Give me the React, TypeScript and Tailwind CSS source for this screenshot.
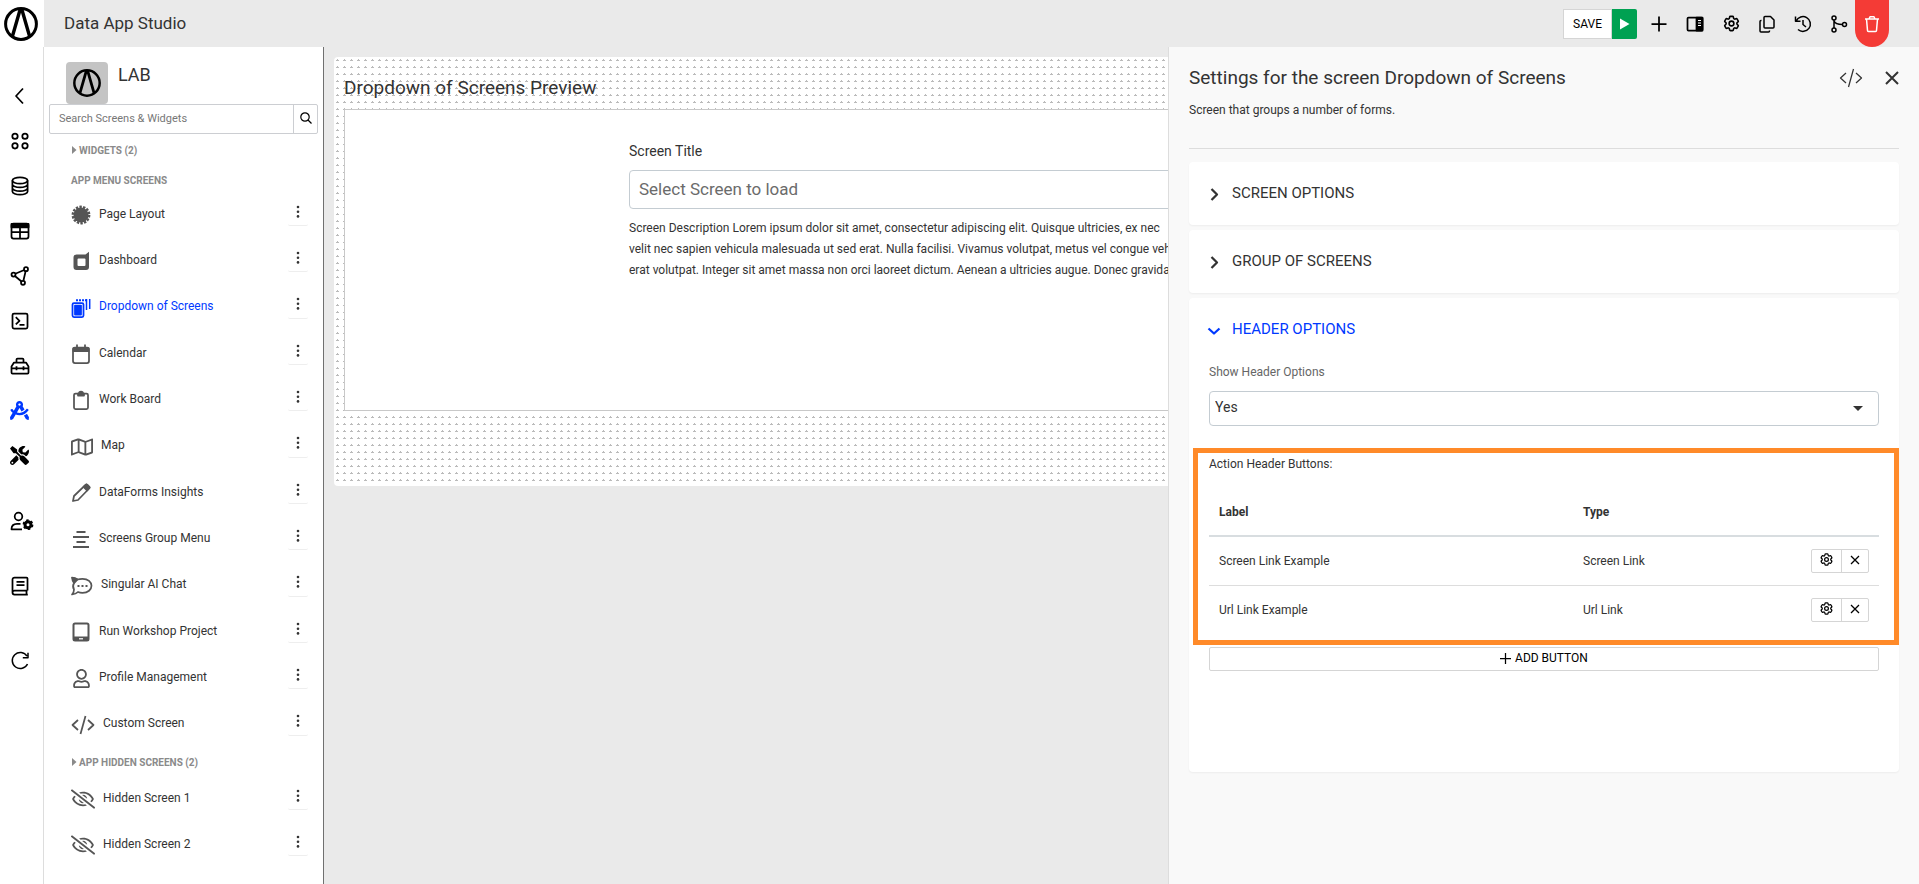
import type { ReactNode } from 'react';
import { FaDraftingCompass, FaRegEyeSlash, FaRegMap, FaRegUser, FaTools } from 'react-icons/fa';
import { HiOutlineCog6Tooth } from 'react-icons/hi2';

type IconProps = { children: ReactNode; size?: number; width?: number; stroke?: number };

// line icons share one 20px grid
function Icon({ children, size = 20, width, stroke = 1.75 }: IconProps) {
  const w = width ?? size;
  return (
    <svg
      width={w}
      height={size}
      viewBox={`0 0 ${w} ${size}`}
      fill="none"
      stroke="currentColor"
      strokeWidth={stroke}
      strokeLinejoin="round"
      className="shrink-0"
      aria-hidden="true"
    >
      {children}
    </svg>
  );
}

function Logo({ size }: { size: number }) {
  return (
    <svg width={size} height={size} viewBox="0 0 34 34" fill="none" stroke="currentColor" aria-hidden="true">
      <circle cx="17" cy="17" r="15.4" strokeWidth="3" />
      <path d="M8.5 29 16 3h2l7.500 26" strokeWidth="3.400" />
    </svg>
  );
}

const CodeIcon = ({ stroke = 1.75 }: { stroke?: number }) => (
  <Icon width={24} stroke={stroke}>
    <path d="M7 5 1.500 10 7 15M17 5l5.500 5-5.500 5M14.500 1l-5 18" />
  </Icon>
);

const railIcons: { label: string; icon: ReactNode; gap?: string; active?: boolean }[] = [
  { label: 'Back', icon: <Icon><path d="M13 2.500 6 10l7 7.500" /></Icon> },
  {
    label: 'Apps',
    icon: (
      <Icon>
        <circle cx="5" cy="5.200" r="2.700" /><circle cx="15" cy="5.200" r="2.700" />
        <circle cx="5" cy="14.800" r="2.700" /><circle cx="15" cy="14.800" r="2.700" />
      </Icon>
    ),
  },
  {
    label: 'Data',
    icon: (
      <Icon>
        <ellipse cx="10" cy="4.500" rx="7.600" ry="3.200" />
        <path d="M2.400 4.500v11c0 1.800 3.400 3.200 7.600 3.200s7.600-1.400 7.600-3.200v-11M2.400 8.200c0 1.800 3.400 3.200 7.600 3.200s7.600-1.400 7.600-3.200M2.400 12c0 1.800 3.400 3.200 7.600 3.200s7.600-1.400 7.600-3.200" />
      </Icon>
    ),
  },
  {
    label: 'Tables',
    icon: (
      <Icon>
        <rect x="1.500" y="2.500" width="17" height="15" rx="2" />
        <path d="M1.500 2.800h17v3.500h-17z" fill="currentColor" />
        <path d="M2 11.200h16M10 6v11" />
      </Icon>
    ),
  },
  {
    label: 'Flows',
    icon: (
      <Icon>
        <circle cx="3.500" cy="8.500" r="2" /><circle cx="16" cy="3.200" r="2" /><circle cx="13" cy="16.800" r="2" />
        <path d="m5.300 7.700 8.900-3.700M15.600 5.200l-2.200 9.600M4.900 10l6.600 5.500" />
      </Icon>
    ),
  },
  {
    label: 'Console',
    icon: (
      <Icon>
        <rect x="2.500" y="2.500" width="15" height="15" rx="1.500" />
        <path d="m5.800 6.200 3.700 3.600-3.700 3.600M9.500 13.800h5" />
      </Icon>
    ),
  },
  {
    label: 'Toolbox',
    icon: (
      <Icon>
        <path d="M1.500 10.500 4 6.500h12l2.500 4v6a1 1 0 0 1-1 1h-15a1 1 0 0 1-1-1zM6.500 6.200V3.500a1 1 0 0 1 1-1h5a1 1 0 0 1 1 1v2.700M1.500 12.300h17M6.500 10.200v4M13.500 10.200v4" />
      </Icon>
    ),
  },
  { label: 'Studio', active: true, icon: <FaDraftingCompass size={19} /> },
  { label: 'Tools', icon: <FaTools size={19} /> },
  {
    label: 'User settings',
    gap: 'mt-5',
    icon: (
      <Icon width={24}>
        <circle cx="8.500" cy="5.500" r="3.800" />
        <path d="M12 18.300H1.500c0-3.600 2.300-5.500 5.500-5.500h3.500" />
        <circle cx="18" cy="13.700" r="3" strokeWidth="3" />
        <circle cx="18" cy="13.700" r="4.600" strokeWidth="1.600" strokeDasharray="2.400 2.417" />
      </Icon>
    ),
  },
  {
    label: 'Docs',
    gap: 'mt-5',
    icon: (
      <Icon>
        <path d="M17.500 14.500H4.500a2 2 0 0 0 0 4h13.300M2.500 16.500V3.500a2 2 0 0 1 2-2h12a1 1 0 0 1 1 1v12M16.500 14.500v4M6.500 5.800h8M6.500 9h8" />
      </Icon>
    ),
  },
  {
    label: 'Refresh',
    gap: 'mt-[30px]',
    icon: <Icon stroke={1.5}><path d="M17 5.200A8 8 0 1 0 17.500 13M18 1.800v5h-5.200" /></Icon>,
  },
];

const menuScreens: { label: string; icon: ReactNode; active?: boolean }[] = [
  {
    label: 'Page Layout',
    icon: (
      <Icon>
        <circle cx="10" cy="10" r="7.500" fill="currentColor" stroke="none" />
        <circle cx="10" cy="10" r="8.200" strokeWidth="2.400" strokeDasharray="2.400 1.280" />
      </Icon>
    ),
  },
  {
    label: 'Dashboard',
    icon: (
      <Icon>
        <path
          fill="currentColor"
          fillRule="evenodd"
          stroke="none"
          d="M5.500 3.500h9L18 .8V16a3 3 0 0 1-3 3H5.500a3 3 0 0 1-3-3V6.500a3 3 0 0 1 3-3zM7.500 7.500a1 1 0 0 0-1 1v5.500a1 1 0 0 0 1 1h6a1 1 0 0 0 1-1V8.500a1 1 0 0 0-1-1z"
        />
      </Icon>
    ),
  },
  {
    label: 'Dropdown of Screens',
    active: true,
    icon: (
      <Icon>
        <rect x="1.500" y="5" width="11" height="14" rx="1.500" />
        <path d="M4 7.500h6v9H4z" fill="currentColor" />
        <path d="M5 2.200h11" strokeDasharray="2 1" strokeWidth="2" />
        <path d="M15.500 1v11M18.700 1v10" strokeWidth="1.500" />
      </Icon>
    ),
  },
  {
    label: 'Calendar',
    icon: (
      <Icon>
        <rect x="2" y="3.500" width="16" height="15.500" rx="2" />
        <path d="M2.500 4.200h15v3h-15zM6 .5v3M14 .5v3" fill="currentColor" />
      </Icon>
    ),
  },
  {
    label: 'Work Board',
    icon: (
      <Icon>
        <rect x="3" y="3.500" width="14" height="15.500" rx="1.500" />
        <path d="M7 3.500h1a2 2 0 0 1 4 0h1v2H7z" fill="currentColor" />
      </Icon>
    ),
  },
  { label: 'Map', icon: <FaRegMap size={22} className="shrink-0" /> },
  {
    label: 'DataForms Insights',
    icon: (
      <Icon>
        <path d="M2 18l1-5L14.500 1.800a1.500 1.500 0 0 1 2 0l1.700 1.700a1.500 1.500 0 0 1 0 2L7 17z" />
        <path d="m12.500 4 3-2.500 3 3L16 7.500z" fill="currentColor" />
      </Icon>
    ),
  },
  {
    label: 'Screens Group Menu',
    icon: <Icon stroke={2}><path d="M5.500 3h9M2 8h16M5.500 13h9M2 18h16" /></Icon>,
  },
  {
    label: 'Singular AI Chat',
    icon: (
      <Icon width={22}>
        <path d="M3 7C1.800 5.500 1.200 3.500 1 1.500c2.200 0 4 .7 5.500 2C8 3 9.800 2.800 11.500 2.800c5.500 0 9 3.200 9 7s-3.500 7-9 7c-1.700 0-3-.2-4.500-.8-1.500 1.500-3.500 2.200-6 2.500 1.500-1.500 2-3.200 2-5C1.700 11.500 1.900 9 3 7z" />
        <path d="m1.500 1.800 5 1.700L3.300 6.800z" fill="currentColor" />
        <path d="M6.500 10h2M10.500 10h2M14.500 10h2" strokeWidth="2" />
      </Icon>
    ),
  },
  {
    label: 'Run Workshop Project',
    icon: (
      <Icon stroke={2}>
        <rect x="2.500" y="1.500" width="15" height="17" rx="1.500" />
        <path d="M3 15h14v3H3z" fill="currentColor" strokeWidth="1" />
        <path d="M8 16.800h4" stroke="white" strokeWidth="1.200" />
      </Icon>
    ),
  },
  { label: 'Profile Management', icon: <span className="flex w-5 justify-center"><FaRegUser size={19} /></span> },
  { label: 'Custom Screen', icon: <CodeIcon /> },
];

const hiddenScreens = ['Hidden Screen 1', 'Hidden Screen 2'];

const toolbar = [
  { label: 'Add', icon: <Icon><path d="M10 2.500v15M2.500 10h15" /></Icon> },
  {
    label: 'Toggle panel',
    icon: (
      <Icon>
        <rect x="2.500" y="3.500" width="15" height="13" rx="1" />
        <path d="M11.500 3.500h6v13h-6z" fill="currentColor" />
        <path d="M13 6.500h3M13 9h3M13 11.500h3" stroke="white" strokeWidth="1" />
      </Icon>
    ),
  },
  { label: 'Settings', icon: <HiOutlineCog6Tooth size={19} strokeWidth={2} /> },
  {
    label: 'Duplicate',
    icon: (
      <Icon stroke={1.5}>
        <path d="M8 2.500h5.500l3.500 3.500v7a1 1 0 0 1-1 1H8a1 1 0 0 1-1-1v-9.500a1 1 0 0 1 1-1zM4.500 6.500H4a1 1 0 0 0-1 1v9.500a1 1 0 0 0 1 1h7.500a1 1 0 0 0 1-1v-.5" />
      </Icon>
    ),
  },
  {
    label: 'History',
    icon: <Icon stroke={1.5}><path d="M3.200 7A7.400 7.400 0 1 1 5 15.500M2.500 2.500v4.800h5M10 6v4.500l3 2.500" /></Icon>,
  },
  {
    label: 'Branches',
    icon: (
      <Icon stroke={1.5}>
        <circle cx="5" cy="4" r="2" /><circle cx="5" cy="16" r="2" /><circle cx="15.500" cy="10.500" r="2" />
        <path d="M5 6v8M5 7c1 2.800 3 3.500 8.500 3.500" />
      </Icon>
    ),
  },
];

const headerButtons = [
  { label: 'Screen Link Example', type: 'Screen Link' },
  { label: 'Url Link Example', type: 'Url Link' },
];

function ScreenRow({ label, icon, active }: { label: string; icon: ReactNode; active?: boolean }) {
  return (
    <li className={`flex min-h-[46px] items-center pr-[15px] pl-[27px] ${active ? 'text-[#0039ff]' : 'text-[#555]'}`}>
      {icon}
      <a href="#" className={`ml-2 pb-[3px] text-xs leading-5 ${active ? '' : 'text-[#333]'}`}>{label}</a>
      <button
        type="button"
        aria-label={`${label} menu`}
        className="mb-1.5 ml-auto flex h-7 w-5 items-center justify-center rounded-xs border-b border-[#eee] text-[#333]"
      >
        <svg width="4" height="14" viewBox="0 0 4 14" fill="currentColor" aria-hidden="true">
          <circle cx="2" cy="2" r="1.300" /><circle cx="2" cy="6.700" r="1.300" /><circle cx="2" cy="11.400" r="1.300" />
        </svg>
      </button>
    </li>
  );
}

function SectionToggle({ title, open }: { title: string; open?: boolean }) {
  return (
    <button
      type="button"
      aria-expanded={!!open}
      className={`flex h-[63px] w-full items-center gap-2 px-[15px] text-[15px] ${open ? 'text-[#0039ff]' : 'text-[#333]'}`}
    >
      <Icon stroke={2.25}>
        {open ? <path d="m4.500 8.500 5.500 5 5.500-5" /> : <path d="m7.500 5 5.500 5.500L7.500 16" />}
      </Icon>
      {title}
    </button>
  );
}

const Caret = () => (
  <svg width="5" height="8" viewBox="0 0 5 8" fill="currentColor" aria-hidden="true">
    <path d="M0 0l4.500 4L0 8z" />
  </svg>
);

export default function App() {
  return (
    <div className="flex min-h-screen bg-[#eaeaea] font-[Roboto,sans-serif] text-[#333]">
      {/* Icon rail */}
      <nav className="flex w-11 shrink-0 flex-col bg-white text-black">
        <div className="flex h-[47px] items-center justify-center pr-0.5">
          <Logo size={34} />
        </div>
        <div className="flex-1 border-r border-[#ddd] pt-[26px]">
          {railIcons.map((item) => (
            <a
              key={item.label}
              href="#"
              aria-label={item.label}
              className={`flex h-[45px] items-center pl-2.5 ${item.gap ?? ''} ${item.active ? 'text-[#0039ff]' : ''}`}
            >
              {item.icon}
            </a>
          ))}
        </div>
      </nav>

      <div className="flex min-w-0 flex-1 flex-col">
        {/* Top bar */}
        <header className="flex h-[47px] items-center pr-[30px] pl-5">
          <h1 className="text-[17px]">Data App Studio</h1>
          <div className="ml-auto flex h-full items-center text-black">
            <div className="mr-1 flex h-[30px]">
              <button type="button" className="border border-[#d5d5d5] bg-white px-[9px] text-xs">SAVE</button>
              <button type="button" aria-label="Run" className="flex w-[25px] items-center justify-center rounded-r-xs bg-[#00a152] text-white">
                <svg width="11" height="12" viewBox="0 0 11 12" fill="currentColor" aria-hidden="true">
                  <path d="M1 .5 10.500 6 1 11.500z" />
                </svg>
              </button>
            </div>
            <div className="-mr-0.5 flex">
              {toolbar.map((item) => (
                <button key={item.label} type="button" aria-label={item.label} className="flex h-9 w-9 items-center justify-center">
                  {item.icon}
                </button>
              ))}
            </div>
            <button type="button" aria-label="Delete" className="flex h-full w-[34px] items-center justify-center rounded-b-full bg-[#f43b36] text-white">
              <Icon stroke={1.5}>
                <path d="M3 5h14M7 5l1-2.200h4L13 5M4.500 5l1 11.500a1 1 0 0 0 1 1h7a1 1 0 0 0 1-1l1-11.500" />
              </Icon>
            </button>
          </div>
        </header>

        <div className="relative flex min-h-0 flex-1">
          {/* Screens list */}
          <aside className="w-[280px] shrink-0 border-r border-[#707070] bg-white pt-[15px]">
            <div className="flex pl-[22px]">
              <span className="flex h-[42px] w-[42px] items-center justify-center rounded bg-[#c4c4c4] text-black">
                <Logo size={28} />
              </span>
              <h2 className="ml-2.5 text-lg leading-[26px]">LAB</h2>
            </div>
            <div className="mx-[5px] flex h-[30px] rounded-xs border border-[#ccced2]">
              <input
                type="search"
                aria-label="Search Screens & Widgets"
                placeholder="Search Screens & Widgets"
                className="min-w-0 flex-1 px-[9px] text-[11px] outline-none placeholder:text-[#777]"
              />
              <button type="button" aria-label="Search" className="flex w-6 items-center justify-center border-l border-[#ccced2] pb-0.5 text-black">
                <svg width="12" height="12" viewBox="0 0 12 12" fill="none" stroke="currentColor" strokeWidth="1.200" aria-hidden="true">
                  <circle cx="5" cy="5" r="4.200" />
                  <path d="m8 8 3.500 3.500" />
                </svg>
              </button>
            </div>
            <button type="button" className="flex h-8 items-center gap-0.5 pl-7 text-[10px] font-bold text-[#8a8a8a]">
              <Caret />
              WIDGETS (2)
            </button>
            <h3 className="flex h-[26px] items-center pt-0.5 pl-[27px] text-[10px] font-bold text-[#8a8a8a]">APP MENU SCREENS</h3>
            <ul className="grid h-[556px] auto-rows-fr">
              {menuScreens.map((screen) => (
                <ScreenRow key={screen.label} {...screen} />
              ))}
            </ul>
            <button type="button" className="flex h-7 items-center gap-0.5 pl-7 text-[10px] font-bold text-[#8a8a8a]">
              <Caret />
              APP HIDDEN SCREENS (2)
            </button>
            <ul>
              {hiddenScreens.map((label) => (
                <ScreenRow key={label} label={label} icon={<FaRegEyeSlash size={24} className="shrink-0" />} />
              ))}
            </ul>
          </aside>

          {/* Preview canvas */}
          <main className="min-w-0 flex-1 overflow-hidden p-2.5">
            <div className="rounded bg-white bg-[radial-gradient(15%_15%_at_50%_48%,#bbb_100%,transparent_0)] bg-[size:7px_7px] px-2.5 pb-[75px]">
              <h2 className="pt-[17px] pb-[7px] text-[19px] leading-7">Dropdown of Screens Preview</h2>
              <div className="h-[302px] border border-[#c8c8c8] bg-white pt-[31px]">
                <div className="mx-auto w-[985px]">
                  <label htmlFor="preview-screen" className="block text-sm">Screen Title</label>
                  <select
                    id="preview-screen"
                    className="mt-[9px] block h-[39px] w-full appearance-none rounded border border-[#c4ccd2] bg-white px-[9px] text-[17px] text-[#6b6b6b]"
                  >
                    <option>Select Screen to load</option>
                  </select>
                  <p className="mt-[9px] text-xs leading-[21px] whitespace-nowrap">
                    Screen Description Lorem ipsum dolor sit amet, consectetur adipiscing elit. Quisque ultricies, ex nec
                    <br />
                    velit nec sapien vehicula malesuada ut sed erat. Nulla facilisi. Vivamus volutpat, metus vel congue vehicula
                    <br />
                    erat volutpat. Integer sit amet massa non orci laoreet dictum. Aenean a ultricies augue. Donec gravida
                  </p>
                </div>
              </div>
            </div>
          </main>

          {/* Settings drawer */}
          <section className="absolute inset-y-0 right-0 w-[751px] border-l border-[#ddd] bg-[#f9f9f9] px-5 pt-4">
            <div className="flex items-center">
              <h2 className="text-[19px] leading-[30px]">Settings for the screen Dropdown of Screens</h2>
              <button type="button" aria-label="Edit code" className="ml-auto flex w-7 justify-center">
                <CodeIcon stroke={1.25} />
              </button>
              <button type="button" aria-label="Close" className="-mr-1 ml-4 flex w-[22px] justify-center">
                <Icon stroke={2}><path d="m4 4 12 12M16 4 4 16" /></Icon>
              </button>
            </div>
            <p className="mt-2 border-b border-[#ddd] pb-[29px] text-xs leading-[18px]">
              Screen that groups a number of forms.
            </p>

            <div className="mt-[13px] flex flex-col gap-[5px]">
              <div className="rounded bg-white shadow-xs shadow-black/5"><SectionToggle title="SCREEN OPTIONS" /></div>
              <div className="rounded bg-white shadow-xs shadow-black/5"><SectionToggle title="GROUP OF SCREENS" /></div>
              <div className="rounded bg-white pb-[101px] shadow-xs shadow-black/5">
                <SectionToggle title="HEADER OPTIONS" open />
                <div className="px-5">
                  <label htmlFor="show-header" className="block pt-px text-xs leading-5 text-[#666]">Show Header Options</label>
                  <div className="relative mt-[9px]">
                    <select
                      id="show-header"
                      className="block h-[35px] w-full appearance-none rounded border border-[#c4ccd2] bg-white px-[5px] pb-[3px] text-sm"
                    >
                      <option>Yes</option>
                      <option>No</option>
                    </select>
                    <svg width="10" height="5" viewBox="0 0 10 5" fill="#333" className="pointer-events-none absolute top-[15px] right-4" aria-hidden="true">
                      <path d="M0 0h10L5 5z" />
                    </svg>
                  </div>

                  <div className="relative mt-[27px]">
                    <p className="pt-px text-xs leading-5">Action Header Buttons:</p>
                    <table className="mt-3 w-full table-fixed text-left text-xs">
                      <thead>
                        <tr className="h-[50px] border-b-2 border-[#d8dde0]">
                          <th scope="col" className="w-[364px] px-2.5 pt-0.5">Label</th>
                          <th scope="col" className="px-2.5 pt-0.5">Type</th>
                          <td className="w-[100px]" />
                        </tr>
                      </thead>
                      <tbody>
                        {headerButtons.map((row) => (
                          <tr key={row.label} className="h-[49px] border-b border-[#ddd] last:border-0">
                            <td className="px-2.5">{row.label}</td>
                            <td className="px-2.5">{row.type}</td>
                            <td className="px-2.5">
                              <div className="ml-auto flex h-6 w-[58px] rounded-xs border border-[#d5d5d5] text-black">
                                <button type="button" aria-label={`Edit ${row.label}`} className="flex flex-1 items-center justify-center pb-0.5">
                                  <HiOutlineCog6Tooth size={15} strokeWidth={2} />
                                </button>
                                <button type="button" aria-label={`Remove ${row.label}`} className="flex w-[27px] items-center justify-center border-l border-[#d5d5d5] pb-0.5">
                                  <Icon size={10} stroke={1.25}><path d="m1 1 8 8M9 1 1 9" /></Icon>
                                </button>
                              </div>
                            </td>
                          </tr>
                        ))}
                      </tbody>
                    </table>
                    <div className="pointer-events-none absolute -top-[5px] -right-5 -left-4 h-[197px] border-[5px] border-[#ff8a29]" />
                  </div>

                  <button
                    type="button"
                    className="mt-[13px] flex h-6 w-full items-center justify-center gap-1 rounded-xs border border-[#d5d5d5] pb-0.5 text-xs text-black"
                  >
                    <Icon size={11} stroke={1.25}><path d="M5.500 0v11M0 5.500h11" /></Icon>
                    ADD BUTTON
                  </button>
                </div>
              </div>
            </div>
          </section>
        </div>
      </div>
    </div>
  );
}
